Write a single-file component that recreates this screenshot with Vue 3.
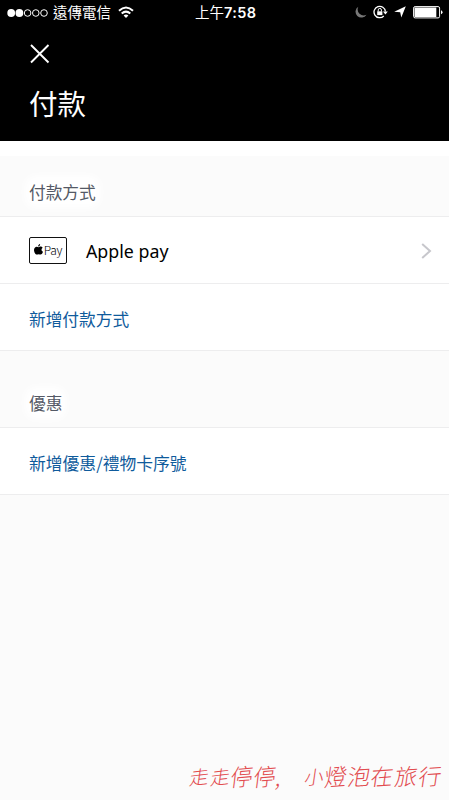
<script setup>
const signal = [true, true, false, false, false]
const watermark = [
  { text: '走', cls: 'small' },
  { text: '走', cls: 'small' },
  { text: '停', cls: 'tall' },
  { text: '停', cls: 'tall' },
  { text: ',', cls: 'comma' },
  { text: '小', cls: 'small' },
  { text: '燈', cls: 'tall' },
  { text: '泡', cls: '' },
  { text: '在', cls: '' },
  { text: '旅', cls: '' },
  { text: '行', cls: '' },
]
</script>

<template>
  <main class="screen">
    <header class="header">
      <div class="status">
        <div class="carrier">
          <svg class="signal" width="42" height="10" viewBox="0 0 42 10">
            <circle v-for="(on, i) in signal" :key="i" :cx="4.2 + i * 8.2" cy="5" :r="on ? 3.9 : 3.3" :fill="on ? '#fff' : 'none'" :stroke="on ? 'none' : '#fff'" stroke-width="1" />
          </svg>
          <span class="carrier-name">遠傳電信</span>
          <svg class="wifi" width="16" height="13" viewBox="0 0 16 13" fill="none" stroke="#fff" stroke-width="2">
            <path d="M1 4.8Q8-1.8 15 4.8M3.7 7.6Q8 3.7 12.3 7.6" />
            <path d="M5.6 9.6Q8 7.5 10.4 9.6L8 12z" fill="#fff" stroke="none" />
          </svg>
        </div>
        <div class="time">上午<b>7:58</b></div>
        <div class="indicators">
          <svg width="13" height="13" viewBox="0 0 12 12"><path d="M4 .7A5.4 5.4 0 1 0 11.5 8 5.5 5.5 0 0 1 4 .7z" fill="#777" /></svg>
          <svg width="15" height="14" viewBox="0 0 15 14" fill="none" stroke="#fff">
            <path d="M10.8 11A5.7 5.7 0 1 1 12.4 6.5" stroke-width="1.3" />
            <path d="M10 6.4h4.8l-2.4 3z" fill="#fff" stroke="none" />
            <rect x="4.2" y="6.3" width="5.2" height="3.8" fill="#fff" stroke="none" />
            <path d="M5.2 6.5V5a1.6 1.6 0 0 1 3.2 0v1.5" />
          </svg>
          <svg width="12" height="12" viewBox="0 0 12 12"><path d="M11.8.3 7.3 11.5 6.2 6.3.2 5.7z" fill="#fff" /></svg>
          <svg class="battery" width="30" height="13" viewBox="0 0 30 13">
            <rect x=".6" y=".6" width="26" height="11.3" rx="1.5" fill="none" stroke="#fff" stroke-width="1" />
            <rect x="1.5" y="1.5" width="21.8" height="9.5" fill="#fff" />
            <path d="M28 4.3q1.5.4 1.5 2t-1.500 2z" fill="#fff" />
          </svg>
        </div>
      </div>
      <svg class="close" width="20" height="20" viewBox="0 0 20 20" stroke="#fff" stroke-width="1.9"><path d="M1 1 18.5 18.5M18.5 1 1 18.5" /></svg>
      <h1>付款</h1>
    </header>
    <div class="strip"></div>
    <h2 class="first"><span>付款方式</span></h2>
    <section>
      <div class="row">
        <div class="pay-card">
          <svg width="9" height="11" viewBox="0 0 18 22">
            <path d="M12.2 0c.2 2.6-1.6 4.9-4.1 5C7.9 2.7 9.8.4 12.2 0zM9.2 6.3c1.2 0 2.3-1.1 4.2-1.1 1.6 0 3 .8 3.9 2.1-3.5 2.2-2.8 6.9.7 8.3-.9 2.6-2.7 5.6-4.8 5.6-1.4 0-2.1-.8-3.7-.8s-2.4.8-3.7.8C2.8 21.2 0 16.2 0 12 0 7.8 2.6 5.3 5.4 5.3c1.6 0 2.9 1 3.8 1z" />
          </svg>
          <span>Pay</span>
        </div>
        <span class="name">Apple pay</span>
        <svg class="chevron" width="11" height="16" viewBox="0 0 11 16" fill="none" stroke="#c7c7cc" stroke-width="2"><path d="M1.2 1 9 8l-7.8 7" /></svg>
      </div>
      <div class="row link">新增付款方式</div>
    </section>
    <h2><span>優惠</span></h2>
    <section>
      <div class="row link coupon">新增優惠/禮物卡序號</div>
    </section>
    <footer class="watermark"><span v-for="(w, i) in watermark" :key="i" :class="w.cls">{{ w.text }}</span></footer>
  </main>
</template>

<style>
body { background: #fbfbfb; }
</style>

<style scoped>
.screen { display: flex; flex-direction: column; box-sizing: border-box; width: 449px; height: 800px; overflow: hidden; background: #fbfbfb; font-family: "Noto Sans CJK TC", sans-serif; }
.header { box-sizing: border-box; height: 141px; background: #000; color: #fff; flex: none; }
.status { display: grid; grid-template-columns: 180px 1fr 104px; height: 25px; font-size: 14.5px; line-height: 24px; }
.carrier { display: flex; align-items: center; padding-left: 7px; }
.carrier-name { margin-left: 4px; white-space: nowrap; line-height: 22px; margin-top: -2px; }
.wifi { margin-left: 7px; margin-top: -1px; }
.time { padding-left: 15px; white-space: nowrap; }
.time b { font-family: Inter, sans-serif; font-size: 14.5px; font-weight: 600; letter-spacing: .4px; }
.indicators { display: flex; align-items: center; padding-left: 9px; height: 24px; }
.indicators svg { flex: none; margin-right: 6px; }
.indicators .battery { margin: 0 0 0 1px; }
.close { display: block; margin: 19px 0 0 30px; }
h1 { margin: 17px 0 0 29px; font-size: 28.5px; line-height: 44px; font-weight: 400; }
.strip { height: 15px; background: #fff; flex: none; }
h2 { box-sizing: border-box; height: 76px; margin: 0; padding: 40px 29px 0; font-size: 16.7px; line-height: 24px; font-weight: 400; color: #555a66; flex: none; }
h2.first { height: 60px; padding-top: 24px; }
h2 span { background: #fff; border-radius: 6px; box-shadow: 0 0 8px 4px #fff; }
section { flex: none; background: #fff; border-top: 1px solid #ededee; }
.row { box-sizing: border-box; display: flex; align-items: center; height: 67px; padding: 1px 18px 0 29px; border-bottom: 1px solid #ededee; }
.link { padding-top: 3px; font-size: 16.7px; color: #0f5b9c; }
.coupon { font-size: 16.8px; }
.pay-card { box-sizing: border-box; display: flex; align-items: center; justify-content: center; gap: 1px; width: 38px; height: 27px; border: 1px solid #111; border-radius: 2px; font-size: 12px; line-height: 20px; font-weight: 300; letter-spacing: -.2px; }
.pay-card svg, .pay-card span { margin-top: -2px; }
.name { margin-left: 19px; padding-top: 1px; font-family: "Noto Sans", sans-serif; font-size: 17.8px; color: #000; }
.chevron { margin-left: auto; margin-right: -1px; margin-top: 1px; }
.watermark { display: flex; align-items: center; height: 44px; margin-top: auto; margin-bottom: 3px; padding-left: 190px; color: #e24b4f; font-size: 22.5px; font-weight: 300; white-space: nowrap; }
.watermark span { flex: none; width: 23.7px; transform: skewX(-12deg) rotate(-4deg); }
.watermark .small { width: 20.5px; font-size: 19px; transform: skewX(-15deg) rotate(-7deg); }
.watermark .tall { width: 22.5px; font-size: 22px; transform: skewX(-12deg) rotate(-5deg) scaleY(1.08); }
.watermark .comma { width: 28.5px; }
</style>
